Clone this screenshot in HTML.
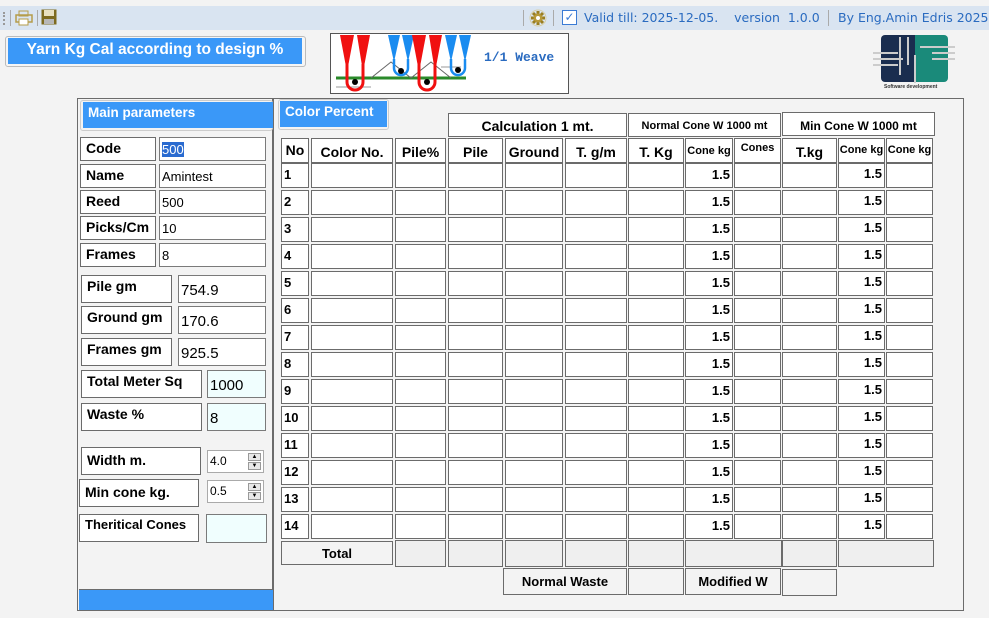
<!DOCTYPE html>
<html><head><meta charset="utf-8"><style>
*{box-sizing:border-box;margin:0;padding:0}
body{width:989px;height:618px;background:#f3f3f3;position:relative;overflow:hidden;font-family:"Liberation Sans",Arial,sans-serif}
.a{position:absolute}
.bx{position:absolute;border:1px solid #6b6b6b;background:#fff}
.lb{position:absolute;border:1px solid #6b6b6b;background:#fff;font-weight:bold;font-size:14px;padding:2px 0 0 5px;color:#000}
.in{position:absolute;border:1px solid #7a7a7a;background:#fff;font-size:13px;padding:4px 0 0 2px}
.r{position:absolute;left:0;height:25px;width:989px}
.r span{position:absolute;top:0;height:25px;border:1px solid #6b6b6b;background:#fff;font-size:13px;font-weight:bold}
.c1{left:281px;width:28px;padding:3px 0 0 2px}
.c2{left:311px;width:82px}.c3{left:395px;width:51px}.c4{left:448px;width:55px}
.c5{left:505px;width:58px}.c6{left:565px;width:62px}.c7{left:628px;width:56px}
.c8{left:685px;width:48px;text-align:right;padding:3px 2px 0 0}.c9{left:734px;width:47px}
.c10{left:782px;width:55px}.c11{left:838px;width:47px;text-align:right;padding:2px 2px 0 0}.c12{left:886px;width:47px}
.h span{font-size:14px;text-align:center;padding-top:5px}
.sm{font-family:"Liberation Sans Narrow","Liberation Sans",sans-serif;font-size:11px!important}
.g{background:#efefef!important}
.spin{position:absolute;border:1px solid #aaa;background:#fff;font-size:12px;padding:3px 0 0 2px}
.spin i{position:absolute;right:2px;width:13px;height:8px;border:1px solid #999;background:#e8e8e8;font-size:6px;font-style:normal;text-align:center;line-height:7px}
</style></head><body>
<div class="a" style="left:0;top:6px;width:989px;height:24px;background:#d9e4f1"></div>
<div class="a" style="left:3px;top:12px;width:2px;height:13px;border-left:2px dotted #999"></div>
<div class="a" style="left:10px;top:10px;width:1px;height:16px;background:#aaa"></div>
<svg class="a" style="left:15px;top:10px" width="18" height="16"><rect x="4" y="1" width="9" height="5" fill="none" stroke="#b59c4a"/><rect x="1" y="5" width="16" height="7" fill="none" stroke="#b59c4a" stroke-width="1.5"/><rect x="4" y="9" width="9" height="6" fill="#fff" stroke="#b59c4a"/></svg>
<div class="a" style="left:37px;top:10px;width:1px;height:16px;background:#aaa"></div>
<svg class="a" style="left:41px;top:9px" width="16" height="16"><rect x="0.5" y="0.5" width="15" height="15" fill="#7d6a1f"/><rect x="3" y="1" width="10" height="6" fill="#e8e0c0"/><rect x="3" y="10" width="10" height="5" fill="#b8b8b8"/></svg>
<div class="a" style="left:523px;top:10px;width:1px;height:16px;background:#aaa"></div>
<svg class="a" style="left:529px;top:9px" width="18" height="18"><circle cx="9" cy="9" r="8" fill="none" stroke="#d8cfa8"/><g stroke="#9a7e20" stroke-width="3"><line x1="9" y1="2" x2="9" y2="16"/><line x1="2" y1="9" x2="16" y2="9"/><line x1="4" y1="4" x2="14" y2="14"/><line x1="14" y1="4" x2="4" y2="14"/></g><circle cx="9" cy="9" r="4.5" fill="#b89a3a"/><circle cx="9" cy="9" r="2" fill="#fff"/></svg>
<div class="a" style="left:553px;top:10px;width:1px;height:16px;background:#aaa"></div>
<div class="a" style="left:562px;top:10px;width:15px;height:15px;border:1px solid #3a7bd5;background:#fff;color:#3a7bd5;font-size:12px;line-height:13px;text-align:center">✓</div>
<div class="a" style="left:584px;top:10px;color:#2a6bc0;white-space:pre;font-family:'DejaVu Sans',sans-serif;font-size:12.5px">Valid till: 2025-12-05.    version  1.0.0</div>
<div class="a" style="left:828px;top:10px;width:1px;height:16px;background:#aaa"></div>
<div class="a" style="left:838px;top:10px;color:#2a6bc0;font-family:'DejaVu Sans',sans-serif;font-size:12.5px">By Eng.Amin Edris 2025</div>

<div class="a" style="left:5px;top:36px;width:301px;height:31px;border:1px solid #bbb;border-radius:3px;background:#f5f5f5"></div>
<div class="a" style="left:8px;top:38px;width:294px;height:26px;background:#3a98f8;color:#fff;font-weight:bold;font-size:15.5px;text-align:center;padding-top:3px">Yarn Kg Cal according to design %</div>

<div class="a" style="left:330px;top:33px;width:239px;height:61px;border:1px solid #555;background:#fff"></div>
<svg class="a" style="left:331px;top:34px" width="237" height="59">
<line x1="5" y1="44" x2="135" y2="44" stroke="#2a8a2a" stroke-width="3"/>
<line x1="5" y1="53" x2="40" y2="53" stroke="#999"/>
<line x1="110" y1="33" x2="130" y2="33" stroke="#999"/>
<polyline points="40,44 60,28 80,44 100,28 120,44" fill="none" stroke="#666"/>
<polygon points="9,1 23,1 16,38" fill="#f01010"/><polygon points="26,1 39,1 32,38" fill="#f01010"/>
<polygon points="57,1 69,1 63,28" fill="#1a8cf0"/><polygon points="71,1 83,1 77,28" fill="#1a8cf0"/>
<polygon points="81,1 95,1 88,38" fill="#f01010"/><polygon points="98,1 111,1 104,38" fill="#f01010"/>
<polygon points="114,1 126,1 120,28" fill="#1a8cf0"/><polygon points="128,1 140,1 134,28" fill="#1a8cf0"/>
<path d="M16 30 V48 a8 8 0 0 0 16 0 V30" fill="none" stroke="#f01010" stroke-width="3"/>
<path d="M88 30 V48 a8 8 0 0 0 16 0 V30" fill="none" stroke="#f01010" stroke-width="3"/>
<path d="M63 25 V34 a7 7 0 0 0 14 0 V25" fill="none" stroke="#1a8cf0" stroke-width="2.5"/>
<path d="M120 25 V34 a7 7 0 0 0 14 0 V25" fill="none" stroke="#1a8cf0" stroke-width="2.5"/>
<circle cx="24" cy="48" r="3" fill="#000"/><circle cx="96" cy="48" r="3" fill="#000"/>
<circle cx="70" cy="37" r="3" fill="#000"/><circle cx="127" cy="36" r="3" fill="#000"/>
<text x="153" y="27" font-family="Liberation Mono,monospace" font-size="13" font-weight="bold" fill="#2a6bc0">1/1 Weave</text>
</svg>

<div class="a" style="left:881px;top:35px;width:34px;height:47px;background:#1a2d4f;border-radius:4px 0 0 4px"></div>
<div class="a" style="left:915px;top:35px;width:33px;height:47px;background:#1a8a7a;border-radius:0 4px 4px 0"></div>
<svg class="a" style="left:870px;top:35px" width="90" height="50"><g stroke="#ccc" stroke-width="2" fill="none"><path d="M3 18H28M3 24H33M3 30H28M30 2V40M38 2V30M45 20V48M50 12H85M62 18H85M62 24H85"/></g></svg>
<div class="a" style="left:884px;top:84px;font-size:5px;color:#333;font-weight:bold">Software development</div>

<div class="a" style="left:77px;top:98px;width:887px;height:513px;border:1px solid #6b6b6b"></div>
<div class="a" style="left:272px;top:98px;width:2px;height:513px;background:#6b6b6b"></div>

<div class="a" style="left:80px;top:100px;width:193px;height:31px;border:1px solid #ccc;border-radius:3px"></div>
<div class="a" style="left:83px;top:102px;width:190px;height:26px;background:#3a98f8;color:#fff;font-weight:bold;font-size:13.5px;padding:3px 0 0 5px">Main parameters</div>
<div class="lb" style="left:80px;top:137px;width:76px;height:24px">Code</div><div class="in" style="left:159px;top:137px;width:107px;height:24px;font-size:13px"><span style="background:#2a6bd0;color:#fff">500</span></div>
<div class="lb" style="left:80px;top:164px;width:76px;height:24px">Name</div><div class="in" style="left:159px;top:164px;width:107px;height:24px">Amintest</div>
<div class="lb" style="left:80px;top:190px;width:76px;height:24px">Reed</div><div class="in" style="left:159px;top:190px;width:107px;height:24px">500</div>
<div class="lb" style="left:80px;top:216px;width:76px;height:24px">Picks/Cm</div><div class="in" style="left:159px;top:216px;width:107px;height:24px">10</div>
<div class="lb" style="left:80px;top:243px;width:76px;height:24px">Frames</div><div class="in" style="left:159px;top:243px;width:107px;height:24px">8</div>
<div class="lb" style="left:81px;top:275px;width:91px;height:28px">Pile gm</div><div class="in" style="left:178px;top:275px;width:88px;height:28px;font-size:15px;padding-top:6px">754.9</div>
<div class="lb" style="left:81px;top:306px;width:91px;height:28px">Ground gm</div><div class="in" style="left:178px;top:306px;width:88px;height:28px;font-size:15px;padding-top:6px">170.6</div>
<div class="lb" style="left:81px;top:338px;width:91px;height:28px">Frames gm</div><div class="in" style="left:178px;top:338px;width:88px;height:28px;font-size:15px;padding-top:6px">925.5</div>
<div class="lb" style="left:81px;top:370px;width:121px;height:28px">Total Meter Sq</div><div class="in" style="left:207px;top:370px;width:59px;height:28px;font-size:15px;padding-top:6px;background:#f0fefe">1000</div>
<div class="lb" style="left:81px;top:403px;width:121px;height:28px">Waste %</div><div class="in" style="left:207px;top:403px;width:59px;height:28px;font-size:15px;padding-top:6px;background:#f0fefe">8</div>
<div class="lb" style="left:81px;top:447px;width:120px;height:28px;padding-top:4px">Width m.</div>
<div class="spin" style="left:207px;top:450px;width:57px;height:23px">4.0<i style="top:2px">▲</i><i style="top:11px">▼</i></div>
<div class="lb" style="left:79px;top:479px;width:120px;height:28px;padding-top:4px">Min cone kg.</div>
<div class="spin" style="left:207px;top:480px;width:57px;height:23px">0.5<i style="top:2px">▲</i><i style="top:11px">▼</i></div>
<div class="lb" style="left:79px;top:514px;width:120px;height:28px;font-size:13px">Theritical Cones</div>
<div class="in" style="left:206px;top:514px;width:61px;height:29px;background:#f0fefe"></div>
<div class="a" style="left:79px;top:589px;width:194px;height:21px;background:#3a98f8;border-top:1px solid #6b6b6b"></div>

<div class="a" style="left:278px;top:99px;width:111px;height:31px;border:1px solid #ccc;border-radius:3px"></div>
<div class="a" style="left:280px;top:101px;width:107px;height:26px;background:#3a98f8;color:#fff;font-weight:bold;font-size:13.5px;padding:3px 0 0 5px">Color Percent</div>

<div class="bx" style="left:448px;top:113px;width:179px;height:24px;font-weight:bold;font-size:14px;text-align:center;padding-top:4px">Calculation 1 mt.</div>
<div class="bx sm" style="left:628px;top:113px;width:153px;height:24px;font-weight:bold;text-align:center;padding-top:6px">Normal Cone W 1000 mt</div>
<div class="bx sm" style="left:782px;top:112px;width:153px;height:24px;font-weight:bold;text-align:center;padding-top:6px;font-size:12px!important">Min Cone W 1000 mt</div>

<div class="r h" style="top:138px"><span class="c1" style="padding:3px 0 0 0">No</span><span class="c2">Color No.</span><span class="c3">Pile%</span><span class="c4">Pile</span><span class="c5">Ground</span><span class="c6">T. g/m</span><span class="c7">T. Kg</span><span class="c8 sm" style="text-align:center;padding:6px 0 0">Cone kg</span><span class="c9 sm" style="padding-top:3px">Cones</span><span class="c10">T.kg</span><span class="c11 sm" style="text-align:center;padding:5px 0 0">Cone kg</span><span class="c12 sm" style="padding-top:5px">Cone kg</span></div>

<div class="r" style="top:163px"><span class="c1">1</span><span class="c2"></span><span class="c3"></span><span class="c4"></span><span class="c5"></span><span class="c6"></span><span class="c7"></span><span class="c8">1.5</span><span class="c9"></span><span class="c10"></span><span class="c11">1.5</span><span class="c12"></span></div>
<div class="r" style="top:190px"><span class="c1">2</span><span class="c2"></span><span class="c3"></span><span class="c4"></span><span class="c5"></span><span class="c6"></span><span class="c7"></span><span class="c8">1.5</span><span class="c9"></span><span class="c10"></span><span class="c11">1.5</span><span class="c12"></span></div>
<div class="r" style="top:217px"><span class="c1">3</span><span class="c2"></span><span class="c3"></span><span class="c4"></span><span class="c5"></span><span class="c6"></span><span class="c7"></span><span class="c8">1.5</span><span class="c9"></span><span class="c10"></span><span class="c11">1.5</span><span class="c12"></span></div>
<div class="r" style="top:244px"><span class="c1">4</span><span class="c2"></span><span class="c3"></span><span class="c4"></span><span class="c5"></span><span class="c6"></span><span class="c7"></span><span class="c8">1.5</span><span class="c9"></span><span class="c10"></span><span class="c11">1.5</span><span class="c12"></span></div>
<div class="r" style="top:271px"><span class="c1">5</span><span class="c2"></span><span class="c3"></span><span class="c4"></span><span class="c5"></span><span class="c6"></span><span class="c7"></span><span class="c8">1.5</span><span class="c9"></span><span class="c10"></span><span class="c11">1.5</span><span class="c12"></span></div>
<div class="r" style="top:298px"><span class="c1">6</span><span class="c2"></span><span class="c3"></span><span class="c4"></span><span class="c5"></span><span class="c6"></span><span class="c7"></span><span class="c8">1.5</span><span class="c9"></span><span class="c10"></span><span class="c11">1.5</span><span class="c12"></span></div>
<div class="r" style="top:325px"><span class="c1">7</span><span class="c2"></span><span class="c3"></span><span class="c4"></span><span class="c5"></span><span class="c6"></span><span class="c7"></span><span class="c8">1.5</span><span class="c9"></span><span class="c10"></span><span class="c11">1.5</span><span class="c12"></span></div>
<div class="r" style="top:352px"><span class="c1">8</span><span class="c2"></span><span class="c3"></span><span class="c4"></span><span class="c5"></span><span class="c6"></span><span class="c7"></span><span class="c8">1.5</span><span class="c9"></span><span class="c10"></span><span class="c11">1.5</span><span class="c12"></span></div>
<div class="r" style="top:379px"><span class="c1">9</span><span class="c2"></span><span class="c3"></span><span class="c4"></span><span class="c5"></span><span class="c6"></span><span class="c7"></span><span class="c8">1.5</span><span class="c9"></span><span class="c10"></span><span class="c11">1.5</span><span class="c12"></span></div>
<div class="r" style="top:406px"><span class="c1">10</span><span class="c2"></span><span class="c3"></span><span class="c4"></span><span class="c5"></span><span class="c6"></span><span class="c7"></span><span class="c8">1.5</span><span class="c9"></span><span class="c10"></span><span class="c11">1.5</span><span class="c12"></span></div>
<div class="r" style="top:433px"><span class="c1">11</span><span class="c2"></span><span class="c3"></span><span class="c4"></span><span class="c5"></span><span class="c6"></span><span class="c7"></span><span class="c8">1.5</span><span class="c9"></span><span class="c10"></span><span class="c11">1.5</span><span class="c12"></span></div>
<div class="r" style="top:460px"><span class="c1">12</span><span class="c2"></span><span class="c3"></span><span class="c4"></span><span class="c5"></span><span class="c6"></span><span class="c7"></span><span class="c8">1.5</span><span class="c9"></span><span class="c10"></span><span class="c11">1.5</span><span class="c12"></span></div>
<div class="r" style="top:487px"><span class="c1">13</span><span class="c2"></span><span class="c3"></span><span class="c4"></span><span class="c5"></span><span class="c6"></span><span class="c7"></span><span class="c8">1.5</span><span class="c9"></span><span class="c10"></span><span class="c11">1.5</span><span class="c12"></span></div>
<div class="r" style="top:514px"><span class="c1">14</span><span class="c2"></span><span class="c3"></span><span class="c4"></span><span class="c5"></span><span class="c6"></span><span class="c7"></span><span class="c8">1.5</span><span class="c9"></span><span class="c10"></span><span class="c11">1.5</span><span class="c12"></span></div>

<div class="bx" style="left:281px;top:541px;width:112px;height:24px;background:#f3f3f3;font-weight:bold;font-size:13px;text-align:center;padding-top:4px">Total</div>
<div class="bx g" style="left:395px;top:540px;width:51px;height:27px"></div>
<div class="bx g" style="left:448px;top:540px;width:55px;height:27px"></div>
<div class="bx g" style="left:505px;top:540px;width:58px;height:27px"></div>
<div class="bx g" style="left:565px;top:540px;width:62px;height:27px"></div>
<div class="bx g" style="left:628px;top:540px;width:56px;height:27px"></div>
<div class="bx g" style="left:685px;top:540px;width:97px;height:27px"></div>
<div class="bx g" style="left:782px;top:540px;width:55px;height:27px"></div>
<div class="bx g" style="left:838px;top:540px;width:96px;height:27px"></div>

<div class="bx" style="left:503px;top:568px;width:124px;height:27px;background:#f3f3f3;font-weight:bold;font-size:13px;text-align:center;padding-top:5px">Normal Waste</div>
<div class="bx" style="left:628px;top:568px;width:56px;height:27px;background:#f3f3f3"></div>
<div class="bx" style="left:685px;top:568px;width:96px;height:27px;background:#f3f3f3;font-weight:bold;font-size:13px;text-align:center;padding-top:5px">Modified W</div>
<div class="bx" style="left:782px;top:569px;width:55px;height:27px;background:#f3f3f3"></div>
</body></html>
